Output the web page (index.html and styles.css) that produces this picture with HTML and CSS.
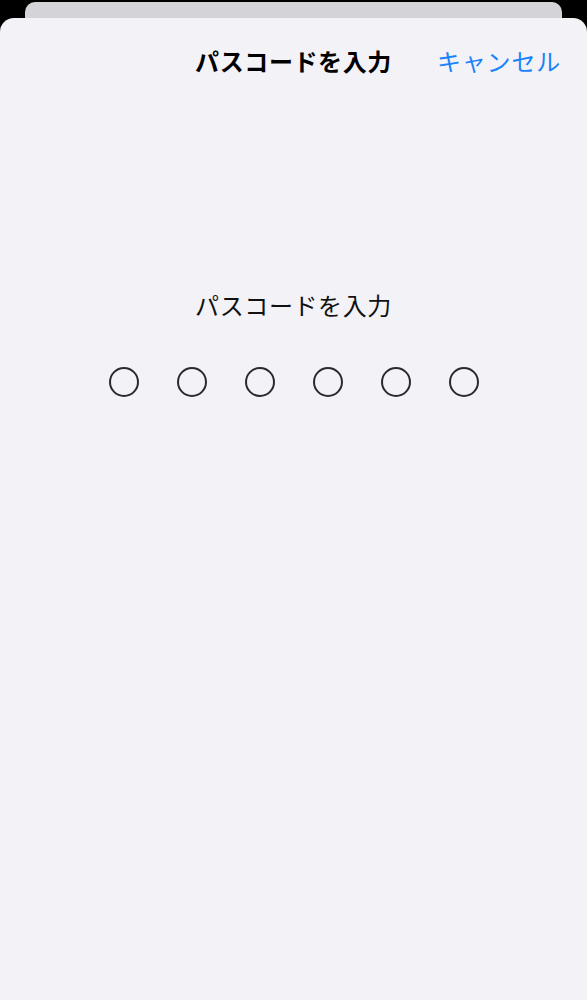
FILE: index.html
```html
<!DOCTYPE html>
<html lang="ja">
<head>
<meta charset="utf-8">
<title>パスコードを入力</title>
<link rel="stylesheet" href="styles.css">
</head>
<body>
<div class="back-card"></div>
<main class="sheet">
  <header class="nav">
    <span class="nav-side"></span>
    <h1 class="nav-title">パスコードを入力</h1>
    <span class="nav-side nav-right"><button class="cancel">キャンセル</button></span>
  </header>
  <section class="entry">
    <p class="prompt">パスコードを入力</p>
    <div class="dots">
      <span class="dot"></span>
      <span class="dot"></span>
      <span class="dot"></span>
      <span class="dot"></span>
      <span class="dot"></span>
      <span class="dot"></span>
    </div>
  </section>
</main>
</body>
</html>
```
FILE: styles.css
```css
html, body {
  margin: 0;
  padding: 0;
  background: #000;
  height: 100%;
}
body {
  font-family: "Noto Sans CJK JP", "Noto Sans", sans-serif;
  display: flex;
  flex-direction: column;
  overflow: hidden;
}
.back-card {
  margin: 2px 25px 0 25px;
  height: 16px;
  background: #d4d3d8;
  border-radius: 10px 10px 0 0;
  flex: none;
}
.sheet {
  flex: 1;
  background: #f2f2f7;
  border-radius: 14px 14px 0 0;
}
.nav {
  display: grid;
  grid-template-columns: 1fr auto 1fr;
  align-items: center;
  padding: 27px 27px 0 27px;
}
.nav-title {
  margin: 0;
  font-size: 24px;
  line-height: 32px;
  font-weight: 700;
  letter-spacing: 0.6px;
  color: #000;
}
.nav-right {
  display: flex;
  justify-content: flex-end;
}
.cancel {
  border: 0;
  background: none;
  padding: 0;
  margin: 0 -1px 0 0;
  font-family: inherit;
  font-size: 24px;
  line-height: 32px;
  letter-spacing: 0.8px;
  color: #1a82fb;
}
.entry {
  display: flex;
  flex-direction: column;
  align-items: center;
  padding-top: 212px;
}
.prompt {
  margin: 0;
  font-size: 24px;
  line-height: 32px;
  letter-spacing: 0.6px;
  color: #111;
}
.dots {
  display: flex;
  gap: 38px;
  margin-top: 46px;
}
.dot {
  width: 30px;
  height: 30px;
  box-sizing: border-box;
  border: 2px solid #2a2a2c;
  border-radius: 50%;
}
```
